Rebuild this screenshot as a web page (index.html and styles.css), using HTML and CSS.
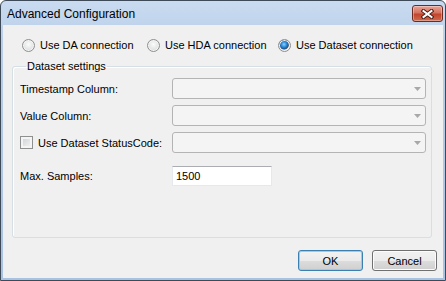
FILE: index.html
```html
<!DOCTYPE html>
<html lang="en">
<head>
    <meta charset="UTF-8">
    <title>Advanced Configuration</title>
    <link rel="stylesheet" href="styles.css">
</head>
<body>

    <div class="window">
        <div class="titlebar">
            <span class="title">Advanced Configuration</span>
            <button class="close-btn" title="Close">
                <svg width="13" height="10" viewBox="0 0 13 10">
                    <path d="M2.5 2 L10.5 8 M10.5 2 L2.5 8" stroke="#4a1a12" stroke-width="4" stroke-linecap="square"/>
                    <path d="M2.5 2 L10.5 8 M10.5 2 L2.5 8" stroke="#fff" stroke-width="2" stroke-linecap="square"/>
                </svg>
            </button>
        </div>

        <div class="client">
            <div class="radio-row">
                <label class="option"><input type="radio" name="conn" class="radio"> Use DA connection</label>
                <label class="option"><input type="radio" name="conn" class="radio"> Use HDA connection</label>
                <label class="option"><input type="radio" name="conn" class="radio" checked> Use Dataset connection</label>
            </div>

            <fieldset class="group">
                <legend>Dataset settings</legend>
                <div class="form-grid">
                    <span class="field-label">Timestamp Column:</span>
                    <div class="combo"><svg width="7" height="4" viewBox="0 0 7 4"><path d="M0 0 H7 L3.5 4 Z" fill="#a8a8a8"/></svg></div>

                    <span class="field-label">Value Column:</span>
                    <div class="combo"><svg width="7" height="4" viewBox="0 0 7 4"><path d="M0 0 H7 L3.5 4 Z" fill="#a8a8a8"/></svg></div>

                    <label class="field-label check-label"><input type="checkbox" class="checkbox"> Use Dataset StatusCode:</label>
                    <div class="combo"><svg width="7" height="4" viewBox="0 0 7 4"><path d="M0 0 H7 L3.5 4 Z" fill="#a8a8a8"/></svg></div>

                    <span class="field-label spaced">Max. Samples:</span>
                    <input type="text" class="textbox spaced" value="1500">
                </div>
            </fieldset>

            <div class="action-buttons">
                <button class="btn btn-default">OK</button>
                <button class="btn">Cancel</button>
            </div>
        </div>
    </div>

</body>
</html>
```

FILE: styles.css
```css
body, html {
    margin: 0;
    padding: 0;
    background: #fff;
    font-family: 'Liberation Sans', Arial, sans-serif;
    font-size: 11px;
    color: #000;
}
.window {
    width: 446px;
    height: 281px;
    box-sizing: border-box;
    border: 1px solid #3f4a58;
    border-radius: 6px 6px 0 0;
    background: linear-gradient(#c9dbf0, #b9cfe9 40px, #a9c2e1);
    padding: 0 2px 2px 2px;
    display: flex;
    flex-direction: column;
}
.titlebar {
    height: 24px;
    box-sizing: border-box;
    padding: 2px 0 0 4px;
    display: flex;
    justify-content: space-between;
    align-items: flex-start;
}
.title {
    font-size: 12px;
    line-height: 22px;
}
.close-btn {
    width: 31px;
    height: 17px;
    margin-top: 2px;
    padding: 0;
    border: 1px solid #6b2a22;
    border-radius: 3px;
    background: linear-gradient(#e8a497, #d5725f 45%, #c2452c 55%, #cf6a4f);
    box-shadow: inset 0 0 0 1px rgba(255, 255, 255, 0.35);
    display: flex;
    justify-content: center;
    align-items: center;
}
.client {
    flex: 1;
    background: #f0f0f0;
    padding: 13px 6px 7px 9px;
    display: flex;
    flex-direction: column;
}
.radio-row {
    display: grid;
    grid-template-columns: 125px 131px auto;
    padding-left: 10px;
    height: 14px;
    align-items: center;
}
.option {
    display: flex;
    align-items: center;
    gap: 5px;
    white-space: nowrap;
}
.radio {
    appearance: none;
    margin: 0;
    width: 13px;
    height: 13px;
    border: 1px solid #8e8f8f;
    border-radius: 50%;
    box-sizing: border-box;
    background: radial-gradient(circle at 50% 40%, #fbfbfb 0, #e8e9ea 45%, #cfd1d3 100%);
    box-shadow: inset 0 0 0 1px #f4f4f4;
}
.radio:checked {
    background: radial-gradient(circle at 45% 40%, #8fd0ff 0, #2a8ad8 30%, #1a5b9a 48%, #5c6670 54%, #e6e7e8 62%, #d4d6d8 100%);
}
.group {
    box-sizing: border-box;
    width: 420px;
    height: 178px;
    margin: 8px 0 0 0;
    padding: 5px 4px 0 7px;
    border: 1px solid #d5dfe5;
    border-radius: 3px;
    box-shadow: inset 1px 1px 0 #fff;
}
.group legend {
    margin-left: 6px;
    padding: 0 1px;
    line-height: 13px;
}
.form-grid {
    display: grid;
    grid-template-columns: 152px 254px;
    grid-auto-rows: 21px;
    row-gap: 6px;
    align-items: center;
}
.field-label {
    white-space: nowrap;
}
.check-label {
    display: flex;
    align-items: center;
    gap: 5px;
}
.checkbox {
    appearance: none;
    margin: 0;
    width: 13px;
    height: 13px;
    box-sizing: border-box;
    border: 1px solid #8e8f8f;
    background: linear-gradient(135deg, #cbcfd5, #f6f6f6);
    box-shadow: inset 0 0 0 2px #f4f4f4;
}
.combo {
    height: 21px;
    box-sizing: border-box;
    border: 1px solid #b4b4b4;
    border-radius: 3px;
    background: #f4f4f4;
    display: flex;
    justify-content: flex-end;
    align-items: center;
    padding: 1px 4px 0 0;
}
.spaced {
    margin-top: 12px;
}
.textbox {
    width: 100px;
    height: 20px;
    box-sizing: border-box;
    border: 1px solid #e3e9ef;
    border-top-color: #abadb3;
    background: #fff;
    padding: 0 3px;
    font: inherit;
    color: #000;
}
.action-buttons {
    margin-top: 12px;
    display: flex;
    justify-content: flex-end;
    gap: 9px;
}
.btn {
    width: 65px;
    height: 21px;
    padding: 0;
    font: inherit;
    color: #000;
    border: 1px solid #707070;
    border-radius: 3px;
    background: linear-gradient(#f2f2f2, #ebebeb 50%, #dddddd 50%, #cfcfcf);
    box-shadow: inset 0 0 0 1px #fcfcfc;
}
.btn-default {
    border-color: #3c7fb1;
    box-shadow: inset 0 0 0 1px #7ed8fb;
}
```
